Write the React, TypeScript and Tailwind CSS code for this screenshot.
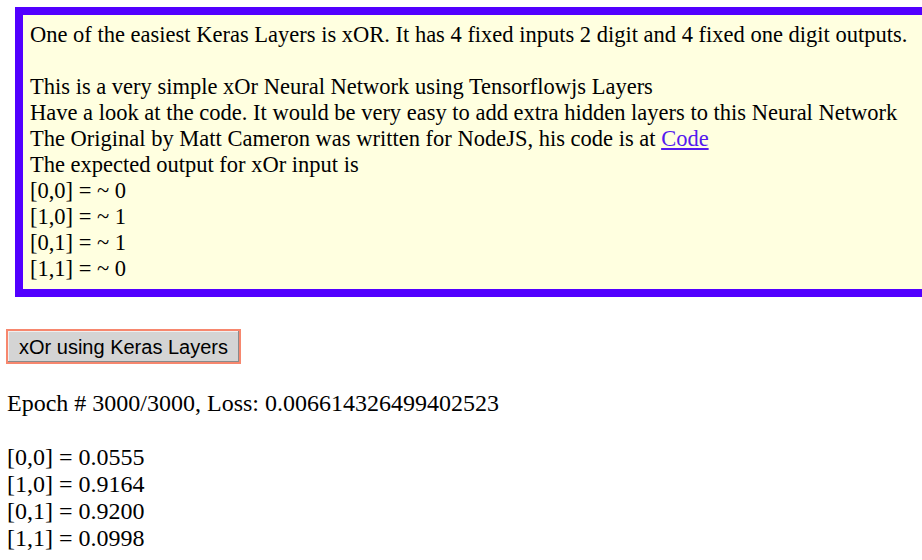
import React from 'react';

const results = [
  ['[0,0]', '0.0555'],
  ['[1,0]', '0.9164'],
  ['[0,1]', '0.9200'],
  ['[1,1]', '0.0998'],
];

const App: React.FC = () => {
  return (
    <div className="w-[922px] h-[560px] overflow-hidden bg-white text-black font-['Liberation_Serif',serif]">
      <div className="ml-[15px] mt-[7px] w-[940px] border-8 border-[#5200ff] bg-[#ffffe0] px-[7px] py-[7px] text-[22.5px] leading-[26px]">
        One of the easiest Keras Layers is xOR. It has 4 fixed inputs 2 digit and 4 fixed one digit outputs.
        <br />
        <br />
        This is a very simple xOr Neural Network using Tensorflowjs Layers
        <br />
        Have a look at the code. It would be very easy to add extra hidden layers to this Neural Network
        <br />
        The Original by Matt Cameron was written for NodeJS, his code is at{' '}
        <a href="#" className="text-[#551aef] underline">
          Code
        </a>
        <br />
        The expected output for xOr input is
        <br />
        [0,0] = ~ 0
        <br />
        [1,0] = ~ 1
        <br />
        [0,1] = ~ 1
        <br />
        [1,1] = ~ 0
      </div>

      <button className="ml-[6px] mt-[32px] h-[35px] w-[235px] border-2 border-[#f7876e] bg-[#d4d4d4] shadow-[inset_-1px_-1px_0_#8a8a8a,inset_1px_1px_0_#efefef] font-['Liberation_Sans',sans-serif] text-[20px] leading-none text-black">
        xOr using Keras Layers
      </button>

      <div className="ml-[7px] mt-[26px] text-[24px] leading-[27px]">
        Epoch # 3000/3000, Loss: 0.006614326499402523
        <br />
        <br />
        {results.map(([k, v]) => (
          <div key={k}>
            {k} = {v}
          </div>
        ))}
      </div>
    </div>
  );
};

export default App;
